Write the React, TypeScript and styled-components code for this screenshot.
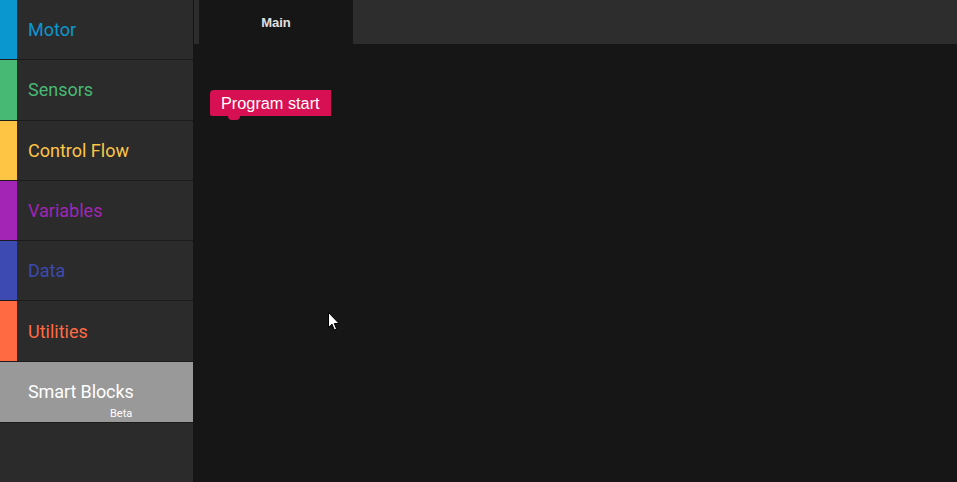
import React from "react"
import styled, { createGlobalStyle } from "styled-components"

const GlobalStyle = createGlobalStyle`
  html, body {
    margin: 0;
    padding: 0;
    background: #161616;
    overflow: hidden;
  }
  * {
    box-sizing: border-box;
  }
`

interface Category {
  name: string
  color: string
}

const categories: Category[] = [
  { name: "Motor", color: "#0a97d0" },
  { name: "Sensors", color: "#48b975" },
  { name: "Control Flow", color: "#fec544" },
  { name: "Variables", color: "#a225b6" },
  { name: "Data", color: "#3c4ab2" },
  { name: "Utilities", color: "#ff6a43" },
]

const App = () => (
  <>
    <GlobalStyle />
    <Page>
      <Sidebar>
        {categories.map((c) => (
          <CategoryRow key={c.name}>
            <ColorStrip color={c.color} />
            <CategoryName color={c.color}>{c.name}</CategoryName>
          </CategoryRow>
        ))}
        <SmartRow>
          <SmartName>Smart Blocks</SmartName>
          <BetaTag>Beta</BetaTag>
        </SmartRow>
      </Sidebar>
      <Editor>
        <TabBar>
          <Tab>Main</Tab>
        </TabBar>
        <Workspace>
          <StartBlock>
            Program start
            <BlockNotch />
          </StartBlock>
          <Cursor width="12" height="19" viewBox="0 0 12 19">
            <path
              d="M0.5 0.5 L0.5 15.5 L4 12.2 L6.4 18 L8.6 17 L6.3 11.5 L11 11.5 Z"
              fill="#fff"
              stroke="#000"
              strokeWidth="1"
            />
          </Cursor>
        </Workspace>
      </Editor>
    </Page>
  </>
)

export default App

const Page = styled.div`
  display: flex;
  width: 957px;
  height: 482px;
  font-family: Roboto, "Liberation Sans", sans-serif;
`

const Sidebar = styled.div`
  width: 194px;
  flex-shrink: 0;
  display: flex;
  flex-direction: column;
  background: #2b2b2b;
  border-right: 1px solid #161616;
`

const CategoryRow = styled.div`
  display: flex;
  align-items: center;
  height: 60.3px;
  border-bottom: 1px solid #1b1b1b;
  flex-shrink: 0;
`

const ColorStrip = styled.div<{ color: string }>`
  width: 17px;
  align-self: stretch;
  background: ${(props) => props.color};
`

const CategoryName = styled.span<{ color: string }>`
  margin-left: 11px;
  font-size: 18px;
  color: ${(props) => props.color};
`

const SmartRow = styled.div`
  position: relative;
  display: flex;
  align-items: center;
  height: 61px;
  padding-left: 28px;
  background: #999999;
  border-bottom: 1px solid #1b1b1b;
  flex-shrink: 0;
`

const SmartName = styled.span`
  font-size: 18px;
  letter-spacing: -0.1px;
  color: #ffffff;
`

const BetaTag = styled.span`
  position: absolute;
  left: 110px;
  top: 45px;
  font-size: 11px;
  color: #ffffff;
`

const Editor = styled.div`
  flex: 1;
  display: flex;
  flex-direction: column;
`

const TabBar = styled.div`
  height: 44px;
  display: flex;
  padding-left: 5px;
  background: #2d2d2d;
`

const Tab = styled.div`
  width: 154px;
  display: flex;
  align-items: center;
  justify-content: center;
  background: #161616;
  color: #e0e0e0;
  font-family: "Liberation Sans", Arial, sans-serif;
  font-weight: bold;
  font-size: 13px;
`

const Workspace = styled.div`
  position: relative;
  flex: 1;
  background: #161616;
`

const StartBlock = styled.div`
  position: absolute;
  left: 16px;
  top: 46px;
  height: 26px;
  padding: 0 11px 0 11px;
  display: flex;
  align-items: center;
  background: #d70f53;
  border-top-left-radius: 4px;
  border-bottom-left-radius: 2px;
  color: #ffffff;
  font-family: "Liberation Sans", Arial, sans-serif;
  font-size: 16.3px;
`

const BlockNotch = styled.div`
  position: absolute;
  left: 18px;
  bottom: -4px;
  width: 12px;
  height: 5px;
  background: #d70f53;
  border-radius: 0 0 4px 4px;
`

const Cursor = styled.svg`
  position: absolute;
  left: 134px;
  top: 268px;
`
